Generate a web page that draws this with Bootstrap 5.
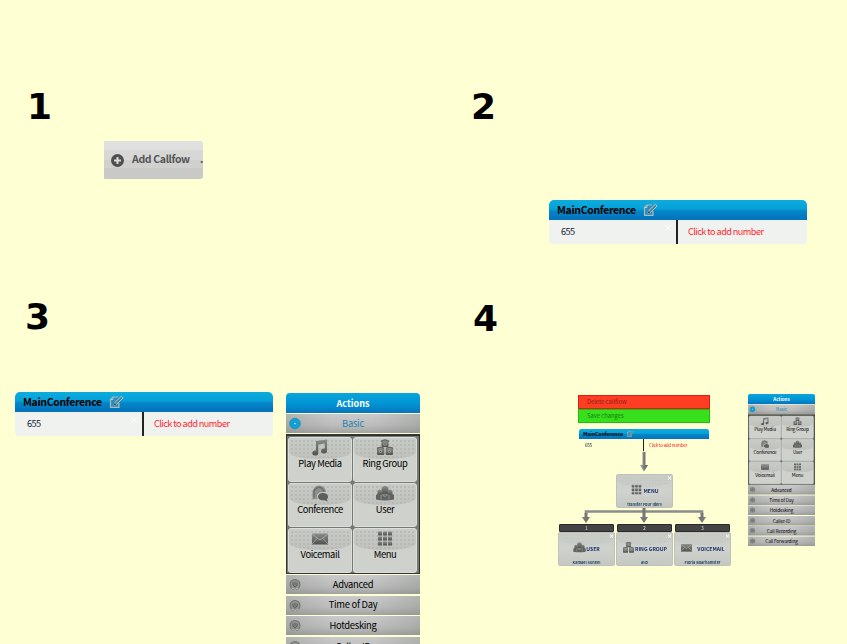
<!DOCTYPE html>
<html lang="en">
<head>
<meta charset="utf-8">
<title>Callflow steps</title>
<link href="https://cdn.jsdelivr.net/npm/bootstrap@5.3.0/dist/css/bootstrap.min.css" rel="stylesheet">
<style>
body{background:#ffffd4;width:847px;height:644px;overflow:hidden;font-family:"Noto Sans CJK SC","Open Sans",sans-serif;font-size:10px;line-height:1;color:#000}
.steps{display:grid;grid-template-columns:447px 400px;grid-template-rows:294px 350px;height:644px;overflow:hidden}
.steps>section{min-width:0;min-height:0}
.num{font:bold 36px/36px "DejaVu Sans",sans-serif;height:36px;margin:0}
.add-btn{width:99px;height:38px;border:0;border-radius:1px 3px 3px 1px;background:linear-gradient(#dfe0df 0 24%,#d7d7d6 24% 50%,#d0d0ce 50% 72%,#c9cac7 72%);color:#555;font-size:10.5px;font-weight:700;letter-spacing:-.35px;line-height:1}
.add-btn>*{margin-top:-2px}
.conf{width:258px;height:44px}
.conf-head{height:20px;border-radius:5px 5px 0 0;background:linear-gradient(#0cacde,#06a0d8 45%,#0585c7 55%,#0572bb);font-size:10.5px;font-weight:700;letter-spacing:-.35px}
.conf-body{height:24px;background:#f0f2ef;border-radius:0 0 4px 4px;font-size:9.2px;letter-spacing:-.58px}
.conf-num{width:129px;border-right:2px solid #222;color:#123}
.conf-x{color:#fff;font-size:9px;line-height:8px}
.conf-add{color:#ff2630}
.panel{width:134px;font-size:9.4px}
.p-head{height:20px;border-radius:4px 4px 0 0;background:linear-gradient(#08a5db,#0296d5 50%,#0675be);color:#fff;font-weight:700;font-size:9px;margin-bottom:1px}
.p-row{height:19px;margin-bottom:1.6px;letter-spacing:-.28px;background:linear-gradient(90deg,rgba(110,115,110,.25),transparent 35% 65%,rgba(110,115,110,.25)),linear-gradient(#c9cac9,#bbbcbb 60%,#a2a4a2)}
.p-row svg{width:12px;height:13px;margin-left:3px}
.p-row span{flex:1;text-align:center;padding-right:15px}
.p-grid{display:grid;grid-template-columns:64px 64px;gap:1px;grid-template-rows:44.7px 44.7px 44.7px;height:140px;background:#747a75;border:1px solid #333;border-top-width:2px;padding:1px 0 0 1px;margin-bottom:1px}
.tile{background:#cfd1cc;border:1px solid #dcdeda;border-radius:3px;position:relative;overflow:hidden;padding-top:1px;letter-spacing:-.4px}
.tile::before,.node::before{content:"";position:absolute;inset:0 0 auto;height:21px;background:radial-gradient(circle,#b3b6b1 0 .6px,transparent 1px) 1px 1px/4px 4px,linear-gradient(#c9cbc7,#bfc1bc);border-radius:2px 2px 50% 50%/2px 2px 7px 7px}
.tile svg{position:relative;width:18px;height:17px}
.tile span{position:relative;margin-top:3px}
.half{transform:scale(.5);transform-origin:0 0}
.canvas{position:relative;height:350px}
.canvas>*{position:absolute}
.flow-btn{left:131px;width:132px;height:14px;font-size:5.8px;padding-left:8px;border:1px solid}
.del{top:101px;background:#ff3d25;border-color:#d9200f;color:#8d1d12}
.save{top:115px;background:#38df1c;border-color:#20bd0c;color:#127b0a}
.mini-conf{left:132px;top:135px;transform:scale(.504);transform-origin:0 0}
.mini-conf .conf-body{background:none}
.mini-conf .conf-x{visibility:hidden}
.node{width:57px;height:34px;border-radius:2px;border:1px solid #bfc1bd;background:linear-gradient(#c9cbc7,#d0d2ce 50%,#c5c7c3);font-size:5.1px;font-weight:700;color:#172b62;overflow:hidden}
.node::before{height:12px;background-size:3px 3px,auto;opacity:.35}
.node svg{width:13px;height:11px;margin-top:-2px}
.node div{height:31px;position:relative;padding-top:1px}
.node small{position:absolute;bottom:0;left:0;right:0;text-align:center;font-size:3.8px;line-height:5px;color:#264a62}
.node i{position:absolute;right:0;top:0;font:bold 6px/5px "DejaVu Sans",sans-serif;color:#fff}
.key{width:55px;height:8px;background:#444;border:1px solid #292929;border-radius:1px;color:#ddd;font-size:5px}
</style>
<script src="https://cdn.jsdelivr.net/npm/bootstrap@5.3.0/dist/js/bootstrap.bundle.min.js"></script>
</head>
<body>
<svg width="0" height="0" class="position-absolute" aria-hidden="true">
<defs>
<linearGradient id="ig" x2="0" y2="1"><stop stop-color="#8b8d8b"/><stop offset="1" stop-color="#505250"/></linearGradient>
<linearGradient id="ag" x2="1" y2="0"><stop stop-color="#aaa"/><stop offset="1" stop-color="#555"/></linearGradient>
</defs>
<symbol id="edit" viewBox="0 0 15 13"><path d="M9 1.500H4L1.500 4v7.800h8.500V7.500" fill="#2a8fbd" stroke="#aab9bd" stroke-width="1.200"/><path d="M1.500 4H4V1.500" fill="none" stroke="#c5d0d2" stroke-width=".8"/><path d="M5 9.800l1-3L12.300.8l1.900 1.600-6.300 6.100z" fill="#4c8399" stroke="#c3cccb" stroke-width=".9"/><path d="M4.700 10l1-2.500 1.400 1.400z" fill="#233"/></symbol>
<symbol id="music" viewBox="0 0 18 16"><path d="M5 1.500l11-1.500v11.500a3 2.500 0 1 1-2.200-2.400V4L7.300 5v8.500a3 2.500 0 1 1-2.300-2.400z" fill="url(#ig)"/></symbol>
<symbol id="ring" viewBox="0 0 18 16"><g fill="url(#ig)"><rect x="5.500" y="1.500" width="7" height="6" rx="1"/><rect x="1" y="9" width="7.300" height="6.500" rx="1"/><rect x="9.700" y="9" width="7.300" height="6.500" rx="1"/></g><path d="M5 2q4-3 8 0M1 9q3.700-2 7 0M10 9q3.500-2 7 0" fill="none" stroke="#666" stroke-width="1.500"/><g fill="#aaaca8"><circle cx="9" cy="4.500" r="1.600"/><circle cx="4.600" cy="12" r="1.400"/><circle cx="13.300" cy="12" r="1.400"/></g><g fill="#666"><circle cx="9" cy="4.500" r=".9"/><circle cx="4.600" cy="12" r=".8"/><circle cx="13.300" cy="12" r=".8"/></g></symbol>
<symbol id="chat" viewBox="0 0 18 16"><path d="M1.500 14V7a6.500 6.500 0 0 1 13.500-.5L12 6.500q-6 0-6.300 5l1 1.500z" fill="#8b8e8a"/><path d="M3 12V7.500a5 5 0 0 1 10-1" fill="none" stroke="#666" stroke-width="1.200"/><path d="M12 7.500c3 0 5 1.600 5 3.800 0 1-.5 1.900-1.200 2.500l1 2.200-3.300-1.200c-4 .6-6.500-1.200-6.500-3.500s2-3.800 5-3.800z" fill="#5c5e5c"/></symbol>
<symbol id="users" viewBox="0 0 18 16"><g fill="url(#ig)"><path d="M5.500 9V4q0-3.500 3.500-3.500T12.500 4v5z"/><path d="M1.500 10V6.500q0-2.500 2.300-2.500T6 6.500V10zM12 10V6.500Q12 4 14.200 4t2.300 2.500V10z"/></g><path d="M0 14V9.500Q2 8 5 9l4 .5 4-.5q3-1 5 .5V14q-9 2-18 0z" fill="#616360"/><path d="M5 14V9.500M13 14V9.500M6.500 9.500L9 11l2.500-1.500" stroke="#aaa" fill="none" stroke-width=".7"/></symbol>
<symbol id="mail" viewBox="0 0 18 16"><rect x="1" y="3" width="16" height="11" fill="url(#ig)"/><path d="M1 3.500l8 6 8-6M1 13.500l5.500-6M17 13.500l-5.500-6" fill="none" stroke="#a5a8a4" stroke-width=".9"/></symbol>
<symbol id="menu" viewBox="0 0 18 16"><g fill="url(#ig)"><rect x="2" y="1" width="4" height="4" rx=".6"/><rect x="7" y="1" width="4" height="4" rx=".6"/><rect x="12" y="1" width="4" height="4" rx=".6"/><rect x="2" y="6" width="4" height="4" rx=".6"/><rect x="7" y="6" width="4" height="4" rx=".6"/><rect x="12" y="6" width="4" height="4" rx=".6"/><rect x="2" y="11" width="4" height="4" rx=".6"/><rect x="7" y="11" width="4" height="4" rx=".6"/><rect x="12" y="11" width="4" height="4" rx=".6"/></g></symbol>
<symbol id="knob" viewBox="0 0 12 13"><circle cx="6" cy="6.500" r="5" fill="#8d908d" stroke="#737773" stroke-width="1.100"/><path d="M4 4.500v2.500l2 2.200 2-2.200V4.500M6 4v3.500" fill="none" stroke="#5c605c" stroke-width="1"/><path d="M2.500 10q3.500 3 7 0" fill="none" stroke="#b8bab8"/></symbol>
<symbol id="knob-on" viewBox="0 0 12 13"><circle cx="6" cy="6.500" r="5.300" fill="#08a4e0" stroke="#398eac"/><path d="M4.300 5.500h3.400L6 8.500z" fill="#bde5ee" stroke="#176d91" stroke-width=".5"/></symbol>
</svg>

<main class="steps">
<section>
  <h2 class="num" style="padding:89px 0 0 27px;height:125px">1</h2>
  <div class="pt-3" style="padding-left:104px">
    <button class="add-btn d-flex align-items-center p-0 position-relative"><svg width="13" height="13" viewBox="0 0 13 13" style="margin:0 8px 0 7px"><circle cx="6.500" cy="6.500" r="6.500" fill="#4f4f4f"/><path d="M6.500 3v7M3 6.500h7" stroke="#dcdcdc" stroke-width="2"/></svg><span>Add Callfow</span><span class="position-absolute end-0">.</span></button>
  </div>
</section>
<section>
  <h2 class="num" style="padding:89px 0 0 24px;height:125px">2</h2>
  <div style="padding:75px 0 0 102px">
    <div class="conf" id="conf">
      <div class="conf-head d-flex align-items-center"><span style="margin:0 7px 0 8px">MainConference</span><svg width="15" height="14"><use href="#edit"/></svg></div>
      <div class="conf-body d-flex"><div class="conf-num d-flex align-items-center justify-content-between"><span style="padding-left:12px">655</span><span class="conf-x align-self-start pt-1 pe-1">×</span></div><div class="conf-add d-flex align-items-center" style="padding-left:10px">Click to add number</div></div>
    </div>
  </div>
</section>
<section class="d-flex overflow-hidden">
  <div style="padding-left:15px;width:286px"><h2 class="num" style="padding:5px 0 0 10px;height:98px">3</h2><div class="conf-slot"></div></div>
  <div style="padding-top:99px"><div class="panel" id="panel">
    <div class="p-head d-flex align-items-center justify-content-center">Actions</div>
    <div class="p-row d-flex align-items-center" style="color:#2386b0;margin-bottom:1px"><svg><use href="#knob-on"/></svg><span>Basic</span></div>
    <div class="p-grid">
      <div class="tile d-flex flex-column align-items-center"><svg><use href="#music"/></svg><span>Play Media</span></div>
      <div class="tile d-flex flex-column align-items-center"><svg><use href="#ring"/></svg><span>Ring Group</span></div>
      <div class="tile d-flex flex-column align-items-center"><svg><use href="#chat"/></svg><span>Conference</span></div>
      <div class="tile d-flex flex-column align-items-center"><svg><use href="#users"/></svg><span>User</span></div>
      <div class="tile d-flex flex-column align-items-center"><svg><use href="#mail"/></svg><span>Voicemail</span></div>
      <div class="tile d-flex flex-column align-items-center"><svg><use href="#menu"/></svg><span>Menu</span></div>
    </div>
    <div class="p-row d-flex align-items-center"><svg><use href="#knob"/></svg><span>Advanced</span></div>
    <div class="p-row d-flex align-items-center"><svg><use href="#knob"/></svg><span>Time of Day</span></div>
    <div class="p-row d-flex align-items-center"><svg><use href="#knob"/></svg><span>Hotdesking</span></div>
    <div class="p-row d-flex align-items-center"><svg><use href="#knob"/></svg><span>Caller-ID</span></div>
    <div class="p-row d-flex align-items-center"><svg><use href="#knob"/></svg><span>Call Recording</span></div>
    <div class="p-row d-flex align-items-center"><svg><use href="#knob"/></svg><span>Call Forwarding</span></div>
  </div></div>
</section>
<section class="canvas">
  <h2 class="num" style="left:26px;top:7px">4</h2>
  <div class="flow-btn del d-flex align-items-center">Delete callflow</div>
  <div class="flow-btn save d-flex align-items-center">Save changes</div>
  <div class="mini-conf conf-slot"></div>
  <svg style="left:130px;top:150px" width="140" height="82">
    <path d="M65.500 8h3v13h2.500l-4 6.500-4-6.500h2.500z" fill="url(#ag)"/>
    <path d="M9 70V67.500h116V70" fill="none" stroke="#8c8c8c" stroke-width="2.500"/>
    <g fill="#777"><path d="M7.500 69h3v4h2.500l-4 6-4-6h2.500z"/><path d="M65.500 64h3v9h2.500l-4 6-4-6h2.500z"/><path d="M123.500 69h3v4h2.500l-4 6-4-6h2.500z"/></g>
  </svg>
  <div class="node" style="left:169px;top:179.500px"><div class="d-flex align-items-center justify-content-center"><svg><use href="#menu"/></svg>MENU</div><small>transfer Four Iders</small><i>×</i></div>
  <div class="key d-flex align-items-center justify-content-center" style="left:112px;top:229.500px">1</div>
  <div class="key d-flex align-items-center justify-content-center" style="left:170px;top:229.500px">2</div>
  <div class="key d-flex align-items-center justify-content-center" style="left:228px;top:229.500px">3</div>
  <div class="node" style="left:111px;top:237.500px"><div class="d-flex align-items-center justify-content-center"><svg><use href="#users"/></svg>USER</div><small>Kamael Suneel</small><i>×</i></div>
  <div class="node" style="left:169px;top:237.500px"><div class="d-flex align-items-center justify-content-center"><svg><use href="#ring"/></svg>RING GROUP</div><small>allo</small><i>×</i></div>
  <div class="node" style="left:227px;top:237.500px"><div class="d-flex align-items-center justify-content-center"><svg class="me-1"><use href="#mail"/></svg>VOICEMAIL</div><small>Floria Boarhamster</small><i>×</i></div>
  <div class="half panel-slot" style="left:301px;top:100px"></div>
</section>
</main>
<script>
/* The number card and the actions panel appear at two sizes. */
function reuse(id, slotClass){
  document.querySelectorAll(slotClass).forEach(function(slot){
    var copy = document.getElementById(id).cloneNode(true);
    copy.removeAttribute('id');
    slot.appendChild(copy);
  });
}
reuse('conf', '.conf-slot');
reuse('panel', '.panel-slot');
/* The full-size panel ends with the row that the window edge crosses. */
document.querySelectorAll('#panel > .p-row:nth-last-child(-n+2)').forEach(function(row){
  row.classList.replace('d-flex', 'd-none');
});
</script>
</body>
</html>
